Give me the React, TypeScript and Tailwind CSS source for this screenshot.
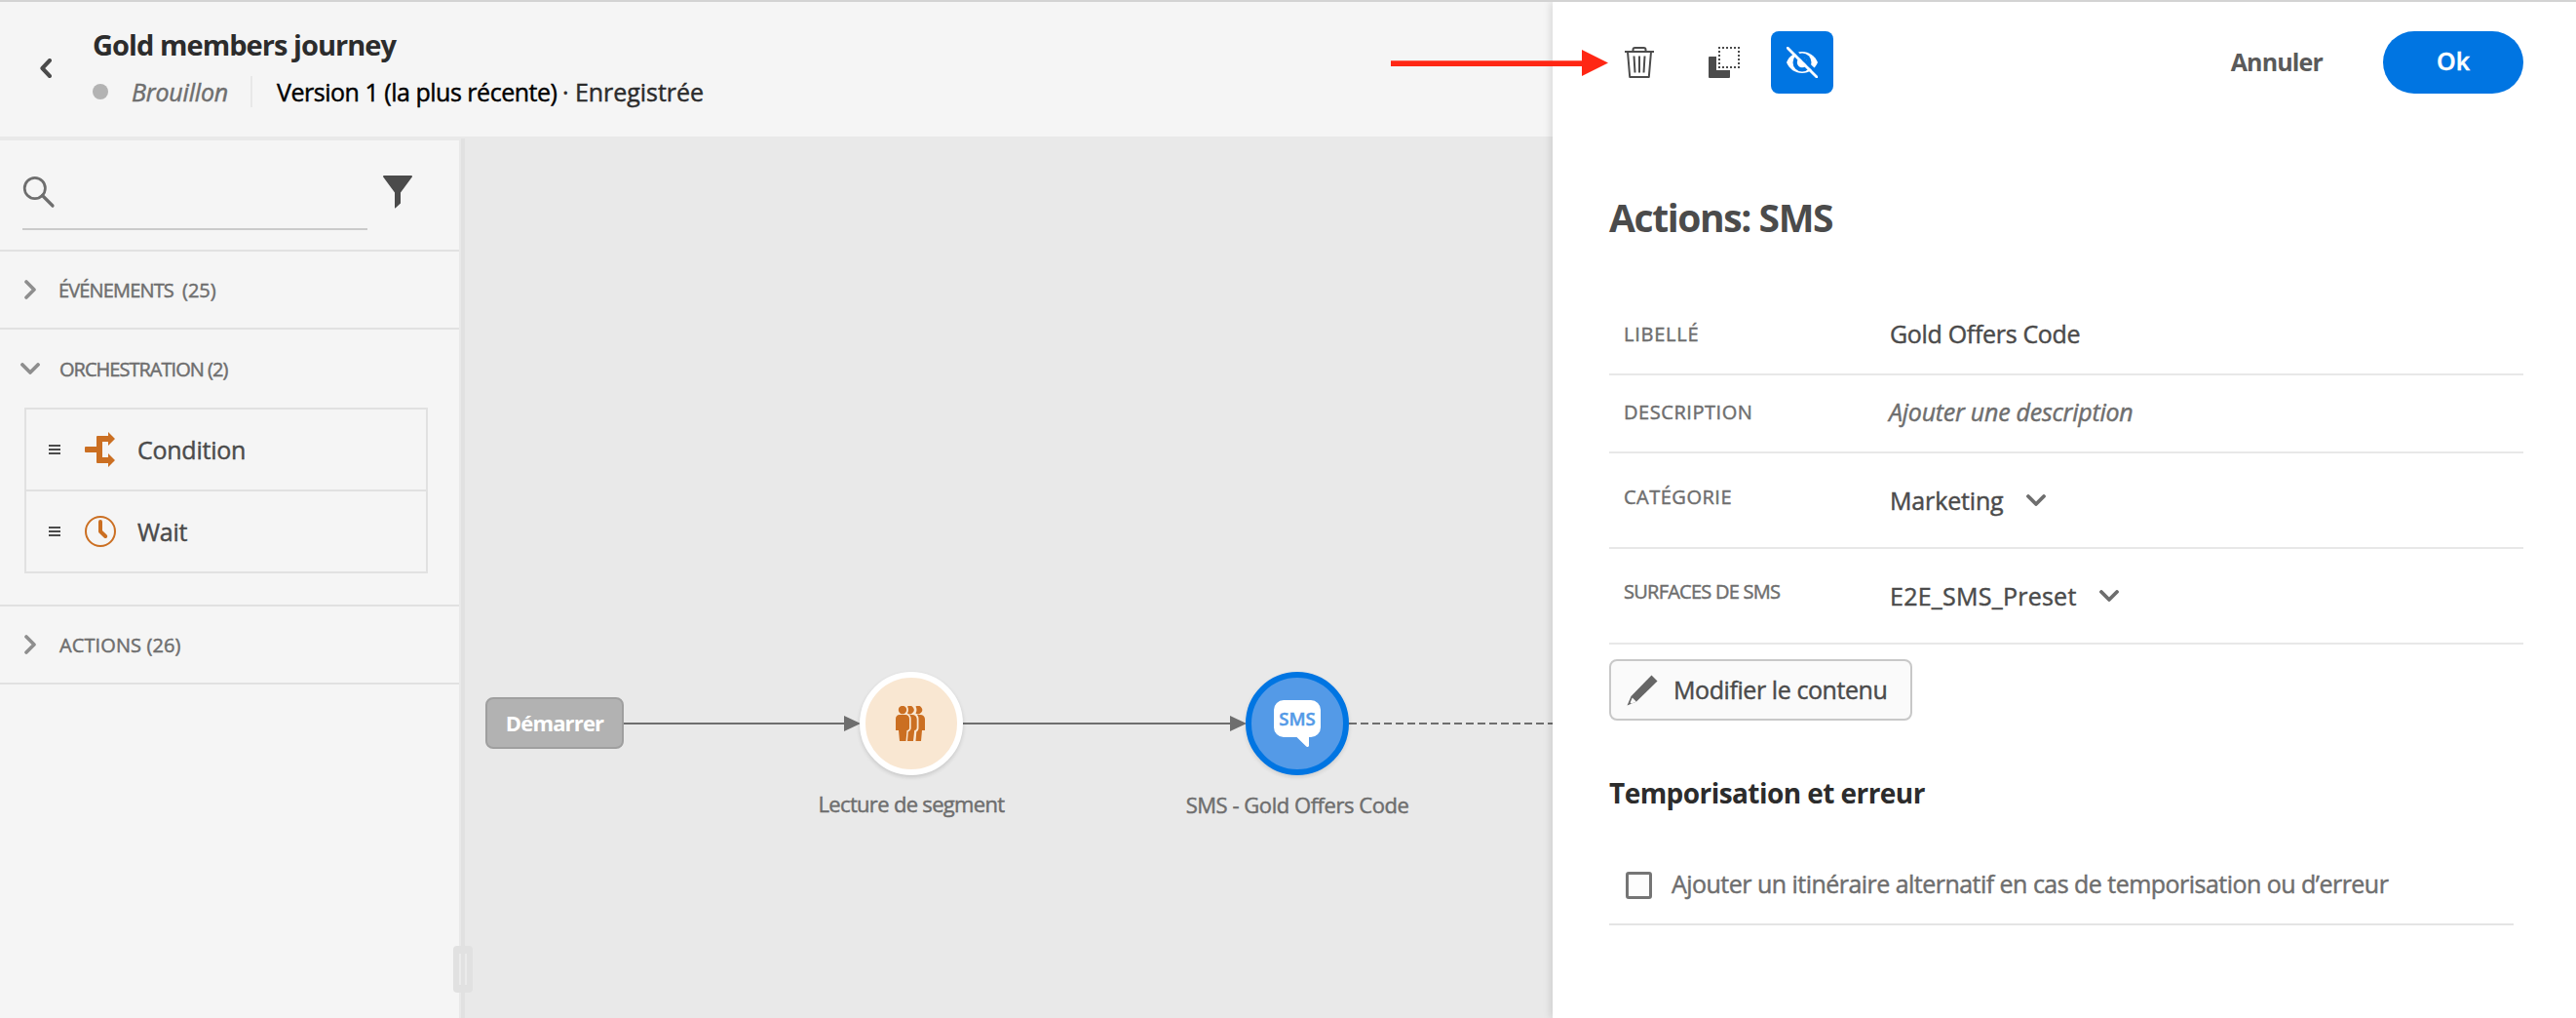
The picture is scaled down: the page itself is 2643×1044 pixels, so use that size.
import type { ReactNode } from "react";

function ChevronRight() {
  return (
    <svg width="20" height="20" viewBox="0 0 20 20" fill="none" className="shrink-0">
      <path d="M6 2l8 8-8 8" stroke="#8e8e8e" strokeWidth="3.6" strokeLinecap="round" strokeLinejoin="round" />
    </svg>
  );
}

function ChevronDown({ color }: { color: string }) {
  return (
    <svg width="20" height="12" viewBox="0 0 20 12" fill="none" className="shrink-0">
      <path d="M2 2l8 8 8-8" stroke={color} strokeWidth="3.8" strokeLinecap="round" strokeLinejoin="round" />
    </svg>
  );
}

function Grip() {
  return (
    <div className="flex w-3 shrink-0 flex-col gap-0.5">
      <div className="h-0.5 bg-[#4b4b4b]" />
      <div className="h-0.5 bg-[#4b4b4b]" />
      <div className="h-0.5 bg-[#4b4b4b]" />
    </div>
  );
}

function ConditionIcon() {
  return (
    <svg width="32" height="36" viewBox="0 0 32 36" fill="#cb6f22" className="shrink-0">
      <path d="M1 15h11V5a1 1 0 0 1 1-1h11V0l7 7-7 7v-4h-6v16h6v-4l7 7-7 7v-4H13a1 1 0 0 1-1-1V21H1a1 1 0 0 1-1-1v-4a1 1 0 0 1 1-1z" />
    </svg>
  );
}

function WaitIcon() {
  return (
    <svg width="32" height="32" viewBox="0 0 32 32" fill="none" className="shrink-0">
      <circle cx="16" cy="16" r="15" stroke="#cb6f22" strokeWidth="2" />
      <path d="M16 6v10l5.2 5" stroke="#cb6f22" strokeWidth="4" strokeLinecap="round" strokeLinejoin="round" />
    </svg>
  );
}

function JourneyHeader() {
  return (
    <header className="flex h-[138px] shrink-0 items-center bg-[#f5f5f5] pb-[3px] pl-[41px]">
      <svg width="12" height="20" viewBox="0 0 12 20" fill="none">
        <path d="M10 2l-7.6 8L10 18" stroke="#4b4b4b" strokeWidth="4" strokeLinecap="round" strokeLinejoin="round" />
      </svg>
      <div className="ml-[42px]">
        <div className="h-12 text-[29px] leading-[48px] font-bold tracking-[-0.95px] text-[#2c2c2c] [-webkit-text-stroke:0]">Gold members journey</div>
        <div className="flex h-12 items-center text-[25px] leading-[48px]">
          <div className="h-4 w-4 rounded-full bg-[#b3b3b3]" />
          <span className="ml-6 w-[99px] tracking-[-0.2px] text-[#6e6e6e] italic">Brouillon</span>
          <div className="ml-[23px] h-8 w-0.5 bg-[#e8e8e8]" />
          <span className="ml-[25px] w-[287px] tracking-[-0.48px] whitespace-nowrap text-black">Version 1 (la plus récente)</span>
          <span className="ml-[6px] tracking-[-0.05px] text-[#2c2c2c]">· Enregistrée</span>
        </div>
      </div>
    </header>
  );
}

function Item({ icon, label }: { icon: ReactNode; label: string }) {
  return (
    <div className="flex h-[82px] items-center pl-[23px]">
      <Grip />
      <div className="ml-[25px] w-[54px]">{icon}</div>
      <span className="pt-px text-[25px] tracking-[-0.25px] text-[#4b4b4b]">{label}</span>
    </div>
  );
}

function Sidebar() {
  return (
    <aside className="mt-1 w-[471px] shrink-0 bg-[#f5f5f5] text-[20px] text-[#6e6e6e]">
      <div className="flex h-[114px] items-start border-b-2 border-[#e1e1e1] pl-[23px]">
        <div className="mt-[36px] h-14 w-[354px] border-b-2 border-[#cacaca]">
          <svg width="34" height="34" viewBox="0 0 34 34" fill="none">
            <circle cx="12.8" cy="13" r="10.6" stroke="#6e6e6e" strokeWidth="2.7" />
            <path d="M20.5 20.5L31 31" stroke="#6e6e6e" strokeWidth="3.2" strokeLinecap="round" />
          </svg>
        </div>
        <svg width="30" height="34" viewBox="0 0 30 34" fill="#4b4b4b" className="mt-[36px] ml-4">
          <path d="M1 0h28a1 1 0 0 1 .8 1.6L18 17.5V28.6L12.8 33.3c-.4.4-.8.2-.8-.4V17.5L.2 1.6A1 1 0 0 1 1 0z" />
        </svg>
      </div>
      <div className="flex h-20 items-center border-b-2 border-[#e1e1e1] pl-[21px]">
        <ChevronRight />
        <span className="ml-[19px] w-[118px] pt-0.5 tracking-[-0.85px]">ÉVÉNEMENTS</span>
        <span className="ml-[9px] pt-0.5">(25)</span>
      </div>
      <div className="border-b-2 border-[#e1e1e1] pb-8">
        <div className="flex h-20 items-center pl-[21px]">
          <ChevronDown color="#8e8e8e" />
          <span className="ml-5 pt-px tracking-[-0.98px]">ORCHESTRATION (2)</span>
        </div>
        <div className="ml-[25px] w-[414px] border-2 border-[#e1e1e1]">
          <Item icon={<ConditionIcon />} label="Condition" />
          <div className="h-0.5 bg-[#e1e1e1]" />
          <Item icon={<WaitIcon />} label="Wait" />
        </div>
      </div>
      <div className="flex h-20 items-center border-b-2 border-[#e1e1e1] pl-[21px]">
        <ChevronRight />
        <span className="ml-5 pt-px tracking-[0.1px]">ACTIONS (26)</span>
      </div>
    </aside>
  );
}

function Canvas() {
  return (
    <main className="relative flex-1">
      <svg width="1116" height="904" viewBox="477 140 1116 904" className="absolute top-0 left-0" fill="none">
        <path d="M640 742H868M988 742H1264" stroke="#6e6e6e" strokeWidth="2" />
        <path d="M1384 742H1593" stroke="#6e6e6e" strokeWidth="2" strokeDasharray="8 4" />
        <path d="M866 734l17 8-17 8zM1262 734l17 8-17 8z" fill="#6e6e6e" />
      </svg>
      <div className="absolute top-[575px] left-[21px] flex h-[53px] w-[142px] items-center justify-center rounded-lg border-2 border-[#9f9f9f] bg-[#b2b2b2] text-[22px] font-bold tracking-[-0.85px] text-white [-webkit-text-stroke:0]">
        Démarrer
      </div>
      <div className="absolute top-[549px] left-[405px] flex h-[106px] w-[106px] items-center justify-center rounded-full border-6 border-white bg-[#f9e7d2] shadow-[0_2px_4px_rgba(0,0,0,0.15)]">
        <svg width="30" height="36" viewBox="0 0 30 36" fill="#cb6f22" className="-translate-x-px">
          <circle cx="7" cy="4" r="4.2" />
          <path d="M4 9h6c2.500 0 4 1.800 4 4v9.500c0 1.500-.8 2.500-2.500 2.500L10.500 36H4L3 25H0V13c0-2.200 1.500-4 4-4z" />
          <path d="M12 .6a4.200 4.200 0 1 1 0 6.800c1.300-2 1.300-4.800 0-6.800zM14 9h3c2.800 0 4.700 1.800 4.700 4.500V22c0 1.800-1 3-2.500 3L18 36h-6l.8-9.500c2-.8 2.900-2.200 2.900-4V13c0-1.600-.6-3-1.700-4z" />
          <path d="M20.500.6a4.200 4.200 0 1 1 0 6.800c1.300-2 1.300-4.800 0-6.800zM22 9h3c3 0 5 1.800 5 4.500V25h-3l-1 11h-5.500l.8-9.500c1.600-.8 2.200-2.200 2.200-4V13.500c0-1.800-.5-3.300-1.500-4.500z" />
        </svg>
      </div>
      <div className="absolute top-[668px] left-[338px] w-60 text-center text-[22px] leading-8 tracking-[-0.68px] text-[#6e6e6e]">Lecture de segment</div>
      <div className="absolute top-[549px] left-[801px] flex h-[106px] w-[106px] items-center justify-center rounded-full border-6 border-[#0075e2] bg-[#549ae7] shadow-[0_2px_4px_rgba(0,0,0,0.12)]">
        <div className="relative h-12 w-12">
          <svg width="48" height="48" viewBox="0 0 48 48" fill="#fff" className="absolute inset-0">
            <path d="M10 0h28a10 10 0 0 1 10 10v18a10 10 0 0 1-10 10h-2v8.500c0 1.500-1.600 2-2.800 1L23.500 38H10A10 10 0 0 1 0 28V10A10 10 0 0 1 10 0z" />
          </svg>
          <span className="absolute inset-x-0 top-0 text-center text-[18.500px] leading-[38px] font-semibold text-[#549ae7]">SMS</span>
        </div>
      </div>
      <div className="absolute top-[669px] left-[724px] w-[260px] text-center text-[22px] leading-8 tracking-[-0.46px] text-[#6e6e6e]">SMS - Gold Offers Code</div>
    </main>
  );
}

function PanelToolbar() {
  return (
    <div className="flex h-16 items-center pl-[15px]">
      <svg width="32" height="32" viewBox="0 0 32 32" fill="none" stroke="#4b4b4b" strokeWidth="2">
        <path d="M1 5h30" />
        <path d="M9.500 5V3a2 2 0 0 1 2-2h9a2 2 0 0 1 2 2v2" />
        <path d="M4 5l2.200 26h19.600L28 5" strokeLinejoin="round" />
        <path d="M10.500 9.500l1 17M16 9.500v17M21.500 9.500l-1 17" />
      </svg>
      <svg width="32" height="32" viewBox="0 0 32 32" fill="none" className="ml-[55px]">
        <path d="M1 10h7v14h14v7a1 1 0 0 1-1 1H1a1 1 0 0 1-1-1V11a1 1 0 0 1 1-1z" fill="#4b4b4b" />
        <path d="M10 1h22M10 21h22M11 4v16M31 4v16" stroke="#4b4b4b" strokeWidth="2" strokeDasharray="2 2" />
      </svg>
      <div className="ml-8 flex h-16 w-16 items-center justify-center rounded-lg bg-[#0075e2]">
        <svg width="32" height="32" viewBox="0 0 32 32" fill="none">
          <path d="M0 16C3 9 9 5 16 5s13 4 16 11c-3 7-9 11-16 11S3 23 0 16z" fill="#fff" />
          <circle cx="16" cy="16" r="9.500" fill="#0075e2" />
          <circle cx="16" cy="16" r="5.200" fill="#fff" />
          <circle cx="18.300" cy="13.500" r="2.300" fill="#0075e2" />
          <path d="M2.500-1.500L34 29.500" stroke="#0075e2" strokeWidth="3.500" />
          <path d="M1.200 1.200L31 31" stroke="#fff" strokeWidth="2.800" strokeLinecap="round" />
        </svg>
      </div>
      <span className="ml-auto text-[25px] font-bold tracking-[-0.85px] text-[#5a5a5a] [-webkit-text-stroke:0]">Annuler</span>
      <div className="ml-[62px] flex h-16 w-36 items-center justify-center rounded-full bg-[#0075e2] pb-[3px] text-[25px] font-semibold text-white">Ok</div>
    </div>
  );
}

function Panel() {
  return (
    <section className="relative w-[1050px] shrink-0 bg-white pt-[30px] pr-[54px] pl-[58px] text-[25px] text-[#4b4b4b] shadow-[-2px_0_8px_rgba(0,0,0,0.12)]">
      <PanelToolbar />
      <h1 className="mt-[101px] h-[52px] text-[39px] leading-[52px] font-bold tracking-[-1.4px] [-webkit-text-stroke:0]">Actions: SMS</h1>
      <div className="mt-[54px] flex h-[82px] items-center border-b-2 border-[#e8e8e8] pl-[15px]">
        <span className="w-[273px] text-[20px] tracking-[0.75px] text-[#6e6e6e]">LIBELLÉ</span>
        <span className="tracking-[-0.32px]">Gold Offers Code</span>
      </div>
      <div className="flex h-20 items-center border-b-2 border-[#e8e8e8] pb-[3px] pl-[15px]">
        <span className="w-[272px] text-[20px] tracking-[0.55px] text-[#6e6e6e]">DESCRIPTION</span>
        <span className="tracking-[-0.25px] text-[#6e6e6e] italic">Ajouter une description</span>
      </div>
      <div className="flex h-[98px] items-center border-b-2 border-[#e8e8e8] pl-[15px]">
        <span className="w-[273px] pb-1.5 text-[20px] tracking-[0.5px] text-[#6e6e6e]">CATÉGORIE</span>
        <span className="w-[140px] pt-px tracking-[-0.15px]">Marketing</span>
        <ChevronDown color="#6e6e6e" />
      </div>
      <div className="flex h-[98px] items-center border-b-2 border-[#e8e8e8] pl-[15px]">
        <span className="w-[273px] pb-2 text-[20px] tracking-[-0.75px] text-[#6e6e6e]">SURFACES DE SMS</span>
        <span className="w-[215px] pt-px tracking-[0.25px]">E2E_SMS_Preset</span>
        <ChevronDown color="#6e6e6e" />
      </div>
      <div className="mt-[15px] flex h-[63px] w-[311px] items-center rounded-lg border-2 border-[#c8c8c8] bg-[#fafafa] pl-4">
        <svg width="32" height="32" viewBox="0 0 32 32">
          <path d="M25.500.5l6 6L10 27.500.500 31.500 4.500 22z" fill="#666" />
          <path d="M5.800 23.500l4 4-5 2.200-1.200-1.200z" fill="#fafafa" />
        </svg>
        <span className="ml-4 pt-px tracking-[-0.42px]">Modifier le contenu</span>
      </div>
      <h2 className="mt-[54px] h-10 text-[28px] leading-10 font-bold tracking-[-0.56px] text-[#2c2c2c] [-webkit-text-stroke:0]">Temporisation et erreur</h2>
      <div className="mt-[35px] flex h-[81px] w-[928px] items-center border-b-2 border-[#e4e4e4] pl-[17px]">
        <div className="h-7 w-[27px] rounded-[3px] border-3 border-[#757575] bg-[#fdfdfd]" />
        <span className="ml-5 pb-0.5 tracking-[-0.53px] text-[#6e6e6e]">Ajouter un itinéraire alternatif en cas de temporisation ou d’erreur</span>
      </div>
      <svg width="226" height="30" viewBox="0 0 226 30" className="absolute top-[47px] -left-[167px]" fill="#ff2714">
        <path d="M1 13.200h196V2l27 13.500L197 29V19H1z" />
      </svg>
    </section>
  );
}

export default function App() {
  return (
    <div className="flex h-[1044px] w-[2643px] overflow-hidden border-t-2 border-[#d3d3d3] bg-[#e9e9e9] font-['Open_Sans',sans-serif] [-webkit-text-stroke:0.45px]">
      <div className="flex w-[1593px] shrink-0 flex-col">
        <JourneyHeader />
        <div className="flex flex-1">
          <Sidebar />
          <div className="relative mt-0.5 ml-0.5 w-1 shrink-0 bg-[#e1e1e1]">
            <div className="absolute top-[828px] -left-2 z-10 flex h-12 w-5 justify-center gap-1 rounded bg-[#e1e1e1] py-2">
              <div className="w-0.5 bg-[#ebebeb]" />
              <div className="w-0.5 bg-[#ebebeb]" />
            </div>
          </div>
          <Canvas />
        </div>
      </div>
      <Panel />
    </div>
  );
}
